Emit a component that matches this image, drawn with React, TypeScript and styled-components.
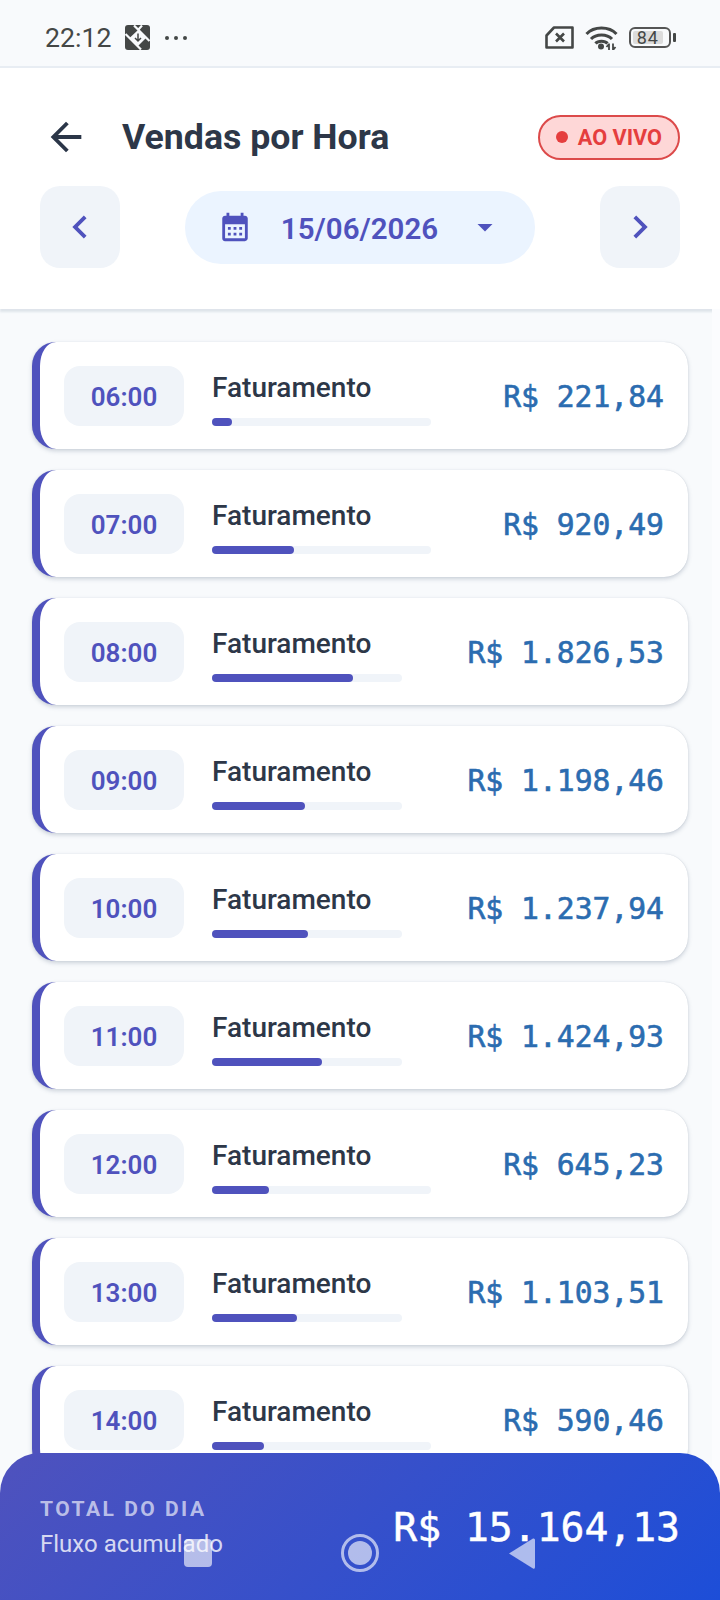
import React from 'react';
import styled, { createGlobalStyle } from 'styled-components';
import { MdArrowBack, MdArrowDropDown, MdCalendarMonth, MdChevronLeft, MdChevronRight } from 'react-icons/md';

const hours = [
  { time: '06:00', value: 221.84 },
  { time: '07:00', value: 920.49 },
  { time: '08:00', value: 1826.53 },
  { time: '09:00', value: 1198.46 },
  { time: '10:00', value: 1237.94 },
  { time: '11:00', value: 1424.93 },
  { time: '12:00', value: 645.23 },
  { time: '13:00', value: 1103.51 },
  { time: '14:00', value: 590.46 },
];

const money = (v: number) =>
  'R$ ' + v.toLocaleString('pt-BR', { minimumFractionDigits: 2, maximumFractionDigits: 2 });

export default function App() {
  return (
    <Page>
      <GlobalStyle />
      <StatusBar>
        <StatusLeft>
          <Clock>22:12</Clock>
          <svg width="25" height="25" viewBox="0 0 25 25">
            <rect width="25" height="25" rx="3" fill="#444746" />
            <path d="M13 5 L21 13 L13 21 L4.500 13 Z" fill="#f8fafc" />
            <path d="M9 0.500 L24.500 16 M0.500 9 L16 24.500 M17 0.500 L13 5" stroke="#f8fafc" strokeWidth="2.200" fill="none" />
            <path d="M13 8.500 V16 M10 13 L13 16 L16 13" stroke="#444746" strokeWidth="1.500" fill="none" />
          </svg>
          <Dots>
            <i />
            <i />
            <i />
          </Dots>
        </StatusLeft>
        <StatusRight>
          <svg width="29" height="23" viewBox="0 0 29 23">
            <path d="M9 1.500 H27.500 V21.500 H1.500 V9.500 Z" fill="none" stroke="#444746" strokeWidth="2.600" strokeLinejoin="round" />
            <path d="M11 7.500 L19 15.500 M19 7.500 L11 15.500" stroke="#444746" strokeWidth="2.600" />
          </svg>
          <svg width="33" height="25" viewBox="0 0 33 25">
            <g fill="none" stroke="#444746" strokeWidth="3">
              <path d="M1.500 9 C9 1 24 1 31.500 9" />
              <path d="M6 14 C11 8.500 22 8.500 27 14" />
              <path d="M10.500 18.500 C13 15.500 20 15.500 22.500 18.500" />
            </g>
            <circle cx="16" cy="21.500" r="3" fill="#444746" />
            <path d="M24 18.500 V25 M21.500 22 L24 19 M28 18.500 V25 M28 25 L30.500 22" stroke="#444746" strokeWidth="1.800" fill="none" />
          </svg>
          <Battery>
            <BatteryLevel>84</BatteryLevel>
          </Battery>
        </StatusRight>
      </StatusBar>

      <Header>
        <TitleRow>
          <BackIcon />
          <Title>Vendas por Hora</Title>
          <LiveBadge>
            <LiveDot />
            AO VIVO
          </LiveBadge>
        </TitleRow>
        <DateRow>
          <NavButton>
            <MdChevronLeft />
          </NavButton>
          <DatePill>
            <MdCalendarMonth size={34} />
            <DateText>15/06/2026</DateText>
            <MdArrowDropDown size={36} />
          </DatePill>
          <NavButton>
            <MdChevronRight />
          </NavButton>
        </DateRow>
      </Header>

      <List>
        {hours.map((h) => (
          <Card key={h.time}>
            <TimeChip>{h.time}</TimeChip>
            <Middle>
              <RowLabel>Faturamento</RowLabel>
              <Track>
                <Fill style={{ width: `${(h.value / 2460) * 100}%` }} />
              </Track>
            </Middle>
            <Amount>{money(h.value)}</Amount>
          </Card>
        ))}
      </List>

      <Footer>
        <div>
          <FooterTitle>TOTAL DO DIA</FooterTitle>
          <FooterSub>Fluxo acumulado</FooterSub>
        </div>
        <FooterTotal>R$ 15.164,13</FooterTotal>
      </Footer>

      <SystemNav>
        <svg width="28" height="28" viewBox="0 0 28 28">
          <rect width="28" height="28" rx="4" fill="#fff" fillOpacity="0.62" />
        </svg>
        <svg width="38" height="38" viewBox="0 0 38 38">
          <circle cx="19" cy="19" r="17.500" fill="none" stroke="#fff" strokeOpacity="0.62" strokeWidth="3" />
          <circle cx="19" cy="19" r="12" fill="#fff" fillOpacity="0.62" />
        </svg>
        <svg width="27" height="33" viewBox="0 0 27 33">
          <path d="M1 16.500 L25 1.500 Q27 1 27 3 V30 Q27 32.500 25 31.500 Z" fill="#fff" fillOpacity="0.62" />
        </svg>
      </SystemNav>
    </Page>
  );
}

const GlobalStyle = createGlobalStyle`
  html, body {
    margin: 0;
    padding: 0;
    background: #f8fafc;
  }
  * {
    box-sizing: border-box;
  }
`;

const Page = styled.div`
  position: relative;
  width: 720px;
  height: 1600px;
  overflow: hidden;
  display: flex;
  flex-direction: column;
  background: #f8fafc;
  font-family: Roboto, "Noto Sans", sans-serif;
`;

const StatusBar = styled.div`
  height: 68px;
  flex: none;
  padding: 9px 45px 0 45px;
  display: flex;
  align-items: center;
  justify-content: space-between;
  background: #f8fafc;
  border-bottom: 2px solid #e8edf3;
`;

const StatusLeft = styled.div`
  display: flex;
  align-items: center;
  gap: 14px;
`;

const StatusRight = styled.div`
  display: flex;
  align-items: center;
  gap: 11px;
`;

const Clock = styled.span`
  font-size: 26.700px;
  color: #444746;
`;

const Dots = styled.span`
  display: flex;
  gap: 5px;
  margin-left: 1px;
  i {
    width: 4px;
    height: 4px;
    border-radius: 50%;
    background: #444746;
  }
`;

const Battery = styled.div`
  position: relative;
  width: 42px;
  height: 21px;
  margin-right: 4px;
  padding: 2px;
  border: 2px solid #555;
  border-radius: 6px;
  &::after {
    content: '';
    position: absolute;
    right: -7px;
    top: 4px;
    width: 3px;
    height: 9px;
    border-radius: 1px;
    background: #444746;
  }
`;

const BatteryLevel = styled.div`
  width: 87%;
  height: 100%;
  background: #dcdcdc;
  border-radius: 2px;
  font-size: 18px;
  line-height: 13px;
  text-align: center;
  color: #444746;
  letter-spacing: 1px;
`;

const Header = styled.header`
  flex: none;
  height: 241px;
  background: #fff;
  padding: 44px 40px 0;
  box-shadow: 0 3px 2px rgba(148, 163, 184, 0.25);
  display: flex;
  flex-direction: column;
  gap: 24px;
`;

const TitleRow = styled.div`
  display: flex;
  align-items: center;
  height: 50px;
`;

const BackIcon = styled(MdArrowBack)`
  width: 46px;
  height: 46px;
  margin-left: 3px;
  color: #2b3648;
  flex: none;
`;

const Title = styled.h1`
  margin: 0 0 0 33px;
  flex: 1;
  font-size: 35.700px;
  font-weight: 700;
  color: #2d3748;
`;

const LiveBadge = styled.div`
  display: flex;
  align-items: center;
  gap: 10px;
  height: 45px;
  padding: 0 16px;
  border: 2px solid #dc4a4a;
  border-radius: 23px;
  background: #fed7d7;
  color: #e53e3e;
  font-size: 21.700px;
  font-weight: 700;
`;

const LiveDot = styled.span`
  width: 12px;
  height: 12px;
  border-radius: 50%;
  background: #e53e3e;
`;

const DateRow = styled.div`
  display: flex;
  align-items: center;
  justify-content: space-between;
`;

const NavButton = styled.div`
  width: 80px;
  height: 82px;
  border-radius: 20px;
  background: #f0f4f9;
  color: #4f52bd;
  display: flex;
  align-items: center;
  justify-content: center;
  font-size: 46px;
`;

const DatePill = styled.div`
  width: 350px;
  height: 73px;
  border-radius: 36px;
  background: #ebf4ff;
  color: #4f52bd;
  display: flex;
  align-items: center;
  padding: 0 32px 0 33px;
  justify-content: space-between;
`;

const DateText = styled.span`
  padding-top: 3px;
  font-size: 29.500px;
  font-weight: 600;
`;

const List = styled.div`
  flex: 1;
  overflow: hidden;
  padding: 33px 24px 0 32px;
  border-right: 8px solid #fbfcfe;
  display: flex;
  flex-direction: column;
  gap: 21px;
`;

const Card = styled.div`
  flex: none;
  height: 107px;
  display: flex;
  align-items: center;
  padding: 0 24px;
  border-left: 8px solid #4f52bd;
  border-radius: 24px;
  background: #fff;
  box-shadow: 0 2px 4px rgba(100, 116, 139, 0.3), 0 0 1px rgba(100, 116, 139, 0.3);
`;

const TimeChip = styled.div`
  flex: none;
  width: 120px;
  height: 60px;
  margin-right: 28px;
  padding-top: 2px;
  border-radius: 16px;
  background: #f0f4f9;
  color: #4f52bd;
  font-size: 26px;
  font-weight: 600;
  display: flex;
  align-items: center;
  justify-content: center;
`;

const Middle = styled.div`
  flex: 4 1 0;
  min-width: 0;
  margin-right: 18px;
  padding-top: 2px;
  display: flex;
  flex-direction: column;
  gap: 9px;
`;

const RowLabel = styled.div`
  font-size: 28px;
  font-weight: 500;
  line-height: 42px;
  color: #2d3748;
  white-space: nowrap;
`;

const Track = styled.div`
  height: 8px;
  border-radius: 4px;
  background: #f0f4f9;
`;

const Fill = styled.div`
  height: 100%;
  border-radius: 4px;
  background: #4f52bd;
`;

const Amount = styled.div`
  flex: 1 0 auto;
  padding-top: 2px;
  text-align: right;
  font-family: "DejaVu Sans Mono", "Liberation Mono", monospace;
  font-size: 29.700px;
  color: #2b6cb0;
  white-space: pre;
  -webkit-text-stroke: 0.6px #2b6cb0;
`;

const Footer = styled.footer`
  position: absolute;
  left: 0;
  right: 0;
  bottom: 0;
  height: 147px;
  padding: 2px 40px 0;
  border-radius: 40px 40px 0 0;
  background: linear-gradient(135deg, #4f52bd 0%, #1d4ed8 100%);
  display: flex;
  align-items: center;
  justify-content: space-between;
`;

const FooterTitle = styled.div`
  font-size: 21px;
  font-weight: 700;
  letter-spacing: 2.500px;
  color: rgba(255, 255, 255, 0.65);
`;

const FooterSub = styled.div`
  margin-top: 9px;
  font-size: 24px;
  color: rgba(255, 255, 255, 0.8);
`;

const FooterTotal = styled.div`
  font-family: "DejaVu Sans Mono", "Liberation Mono", monospace;
  font-size: 39.700px;
  margin-top: -2px;
  color: #fff;
  white-space: pre;
  -webkit-text-stroke: 0.5px #fff;
`;

const SystemNav = styled.div`
  position: absolute;
  left: 0;
  right: 0;
  bottom: 28px;
  padding: 0 185px 0 184px;
  display: flex;
  align-items: center;
  justify-content: space-between;
`;
